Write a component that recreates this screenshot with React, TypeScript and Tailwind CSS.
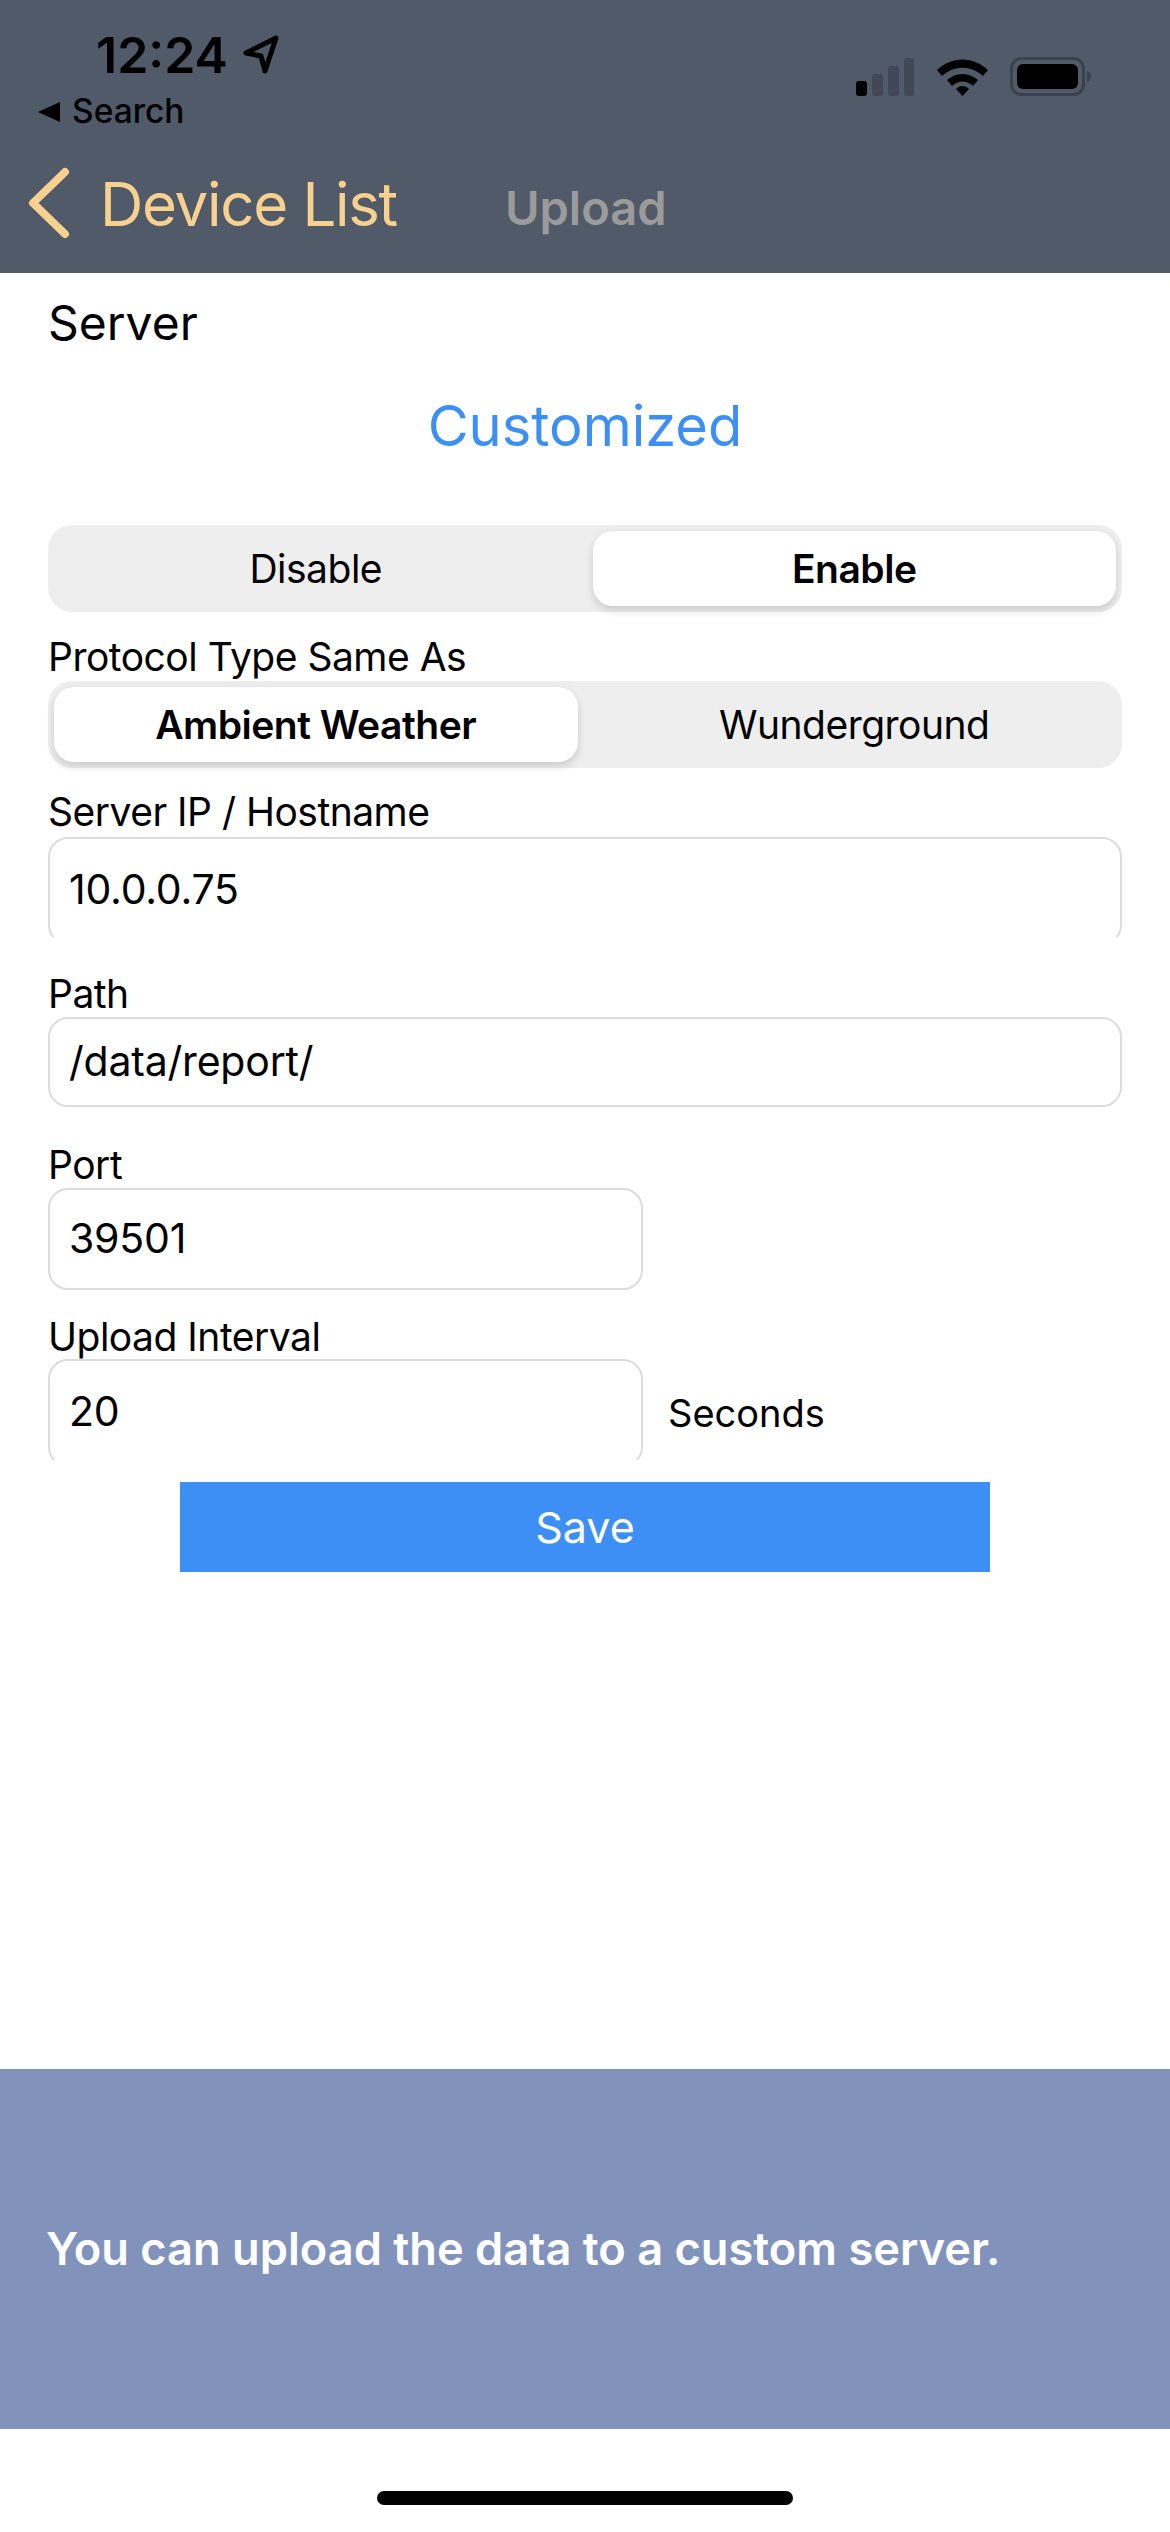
import React from 'react';

const Segmented = ({ left, right, active }: { left: string; right: string; active: 'left' | 'right' }) => (
  <div className="grid h-[87px] grid-cols-2 gap-[15px] rounded-[24px] bg-[#eeeeee] p-[6px] text-[39px] leading-none tracking-[-0.5px] text-black">
    {[left, right].map((label, index) => {
      const isActive = (index === 0) === (active === 'left');
      return (
        <div
          key={label}
          className={
            isActive
              ? 'flex items-center justify-center rounded-[20px] bg-white font-semibold shadow-[0_5px_8px_rgba(0,0,0,0.12),0_0_8px_rgba(0,0,0,0.04)]'
              : 'flex items-center justify-center'
          }
        >
          {label}
        </div>
      );
    })}
  </div>
);

const FieldLabel = ({ children, className }: { children: string; className: string }) => (
  <div className={`h-[48px] text-[39px] leading-[48px] tracking-[-0.5px] text-black ${className}`}>{children}</div>
);

// some of the inputs lose their bottom edge in the screenshot, so clip = true cuts them off
const Field = ({ value, height, width, clip }: { value: string; height: string; width: string; clip?: boolean }) => (
  <div className={`${height} ${width} overflow-hidden`}>
    <div
      className={`flex items-center rounded-[20px] border-2 border-[#dcdcdc] pl-[19px] text-[41px] tracking-[-0.2px] text-black ${
        clip ? 'h-[108px] pb-[2px]' : 'h-full'
      }`}
    >
      {value}
    </div>
  </div>
);

const StatusIcons = () => (
  <svg width="240" height="42" viewBox="0 0 240 42" className="block">
    <rect x="0" y="24" width="11" height="15" rx="3" fill="#000" />
    <rect x="16" y="17" width="11" height="22" rx="3" fill="#3f4854" />
    <rect x="32" y="9" width="11" height="30" rx="3" fill="#3f4854" />
    <rect x="48" y="1" width="10" height="38" rx="3" fill="#3f4854" />
    <path d="M81 13 C96 -1 117 -1 132 13 L127 19 C115 8 98 8 86 19 Z" fill="#000" />
    <path d="M91 23 C100 15 113 15 122 23 L117 29 C110 23 103 23 96 29 Z" fill="#000" />
    <path d="M100 32 C104 28 109 28 113 32 L106.500 39 Z" fill="#000" />
    <rect x="155.500" y="1.500" width="72" height="36" rx="10" fill="none" stroke="#3a424e" strokeWidth="3" />
    <rect x="161" y="7" width="61" height="25" rx="6" fill="#000" />
    <path d="M231 14 C234 15 235 17 235 19.500 C235 22 234 24 231 25 Z" fill="#3a424e" />
  </svg>
);

const App = () => {
  return (
    <div className="relative h-[2532px] w-[1170px] bg-white font-['Inter',sans-serif]">
      <header className="h-[273px] bg-[#505a68]">
        <div className="flex justify-between pl-[38px] pr-[74px]">
          <div>
            <div className="flex h-[84px] items-end pl-[58px]">
              <span className="text-[50px] font-semibold leading-[58px] text-black">12:24</span>
              <svg width="42" height="42" viewBox="0 0 42 42" className="mb-[8px] ml-[12px]">
                <path d="M36 4 L6 19 L21 22 L25 37 Z" fill="none" stroke="#000" strokeWidth="5" strokeLinejoin="round" />
              </svg>
            </div>
            <div className="flex h-[50px] items-center pt-[6px]">
              <svg width="22" height="20" viewBox="0 0 22 20">
                <path d="M22 0 V20 L0 10 Z" fill="#000" />
              </svg>
              <span className="ml-[12px] text-[33.500px] font-medium leading-none text-black">Search</span>
            </div>
          </div>
          <div className="pt-[57px]">
            <StatusIcons />
          </div>
        </div>
        <div className="flex h-[139px] items-center pl-[26px]">
          <svg width="48" height="76" viewBox="0 0 48 76">
            <path d="M39 6 L7 37 L39 68" fill="none" stroke="#f9d18f" strokeWidth="8" strokeLinecap="round" strokeLinejoin="round" />
          </svg>
          <span className="ml-[26px] text-[60px] leading-none tracking-[-1.3px] text-[#f9d18f]">Device List</span>
          <span className="ml-[108px] mt-[8px] text-[47px] font-semibold leading-none text-[#9b9b9b]">Upload</span>
        </div>
      </header>

      <main className="px-[48px]">
        <div className="mt-[20px] h-[60px] text-[48px] leading-[60px] text-black">Server</div>
        <div className="mt-[37px] h-[72px] text-center text-[56px] leading-[72px] text-[#3e8ff5]">Customized</div>

        <div className="mt-[63px]">
          <Segmented left="Disable" right="Enable" active="right" />
        </div>

        <FieldLabel className="mt-[21px]">Protocol Type Same As</FieldLabel>
        <Segmented left="Ambient Weather" right="Wunderground" active="left" />

        <FieldLabel className="mt-[20px]">Server IP / Hostname</FieldLabel>
        <div className="mt-[1px]">
          <Field value="10.0.0.75" height="h-[100px]" width="w-full" clip />
        </div>

        <FieldLabel className="mt-[33px]">Path</FieldLabel>
        <div className="-mt-[1px]">
          <Field value="/data/report/" height="h-[90px]" width="w-full" />
        </div>

        <FieldLabel className="mt-[34px]">Port</FieldLabel>
        <div className="-mt-[1px]">
          <Field value="39501" height="h-[102px]" width="w-[595px]" />
        </div>

        <FieldLabel className="mt-[23px]">Upload Interval</FieldLabel>
        <div className="-mt-[2px] flex items-center">
          <Field value="20" height="h-[101px]" width="w-[595px]" clip />
          <span className="ml-[25px] mt-[6px] text-[38px] leading-none text-black">Seconds</span>
        </div>

        <div className="mx-auto mt-[22px] flex h-[90px] w-[810px] items-center justify-center bg-[#3e8ff5] text-[43px] text-white">
          Save
        </div>
      </main>

      <section className="mt-[497px] flex h-[360px] items-center bg-[#8293bb] px-[46px]">
        <p className="text-[45.200px] font-semibold text-white">You can upload the data to a custom server.</p>
      </section>

      <div className="mx-auto mt-[62px] h-[14px] w-[416px] rounded-full bg-black" />
    </div>
  );
};

export default App;
